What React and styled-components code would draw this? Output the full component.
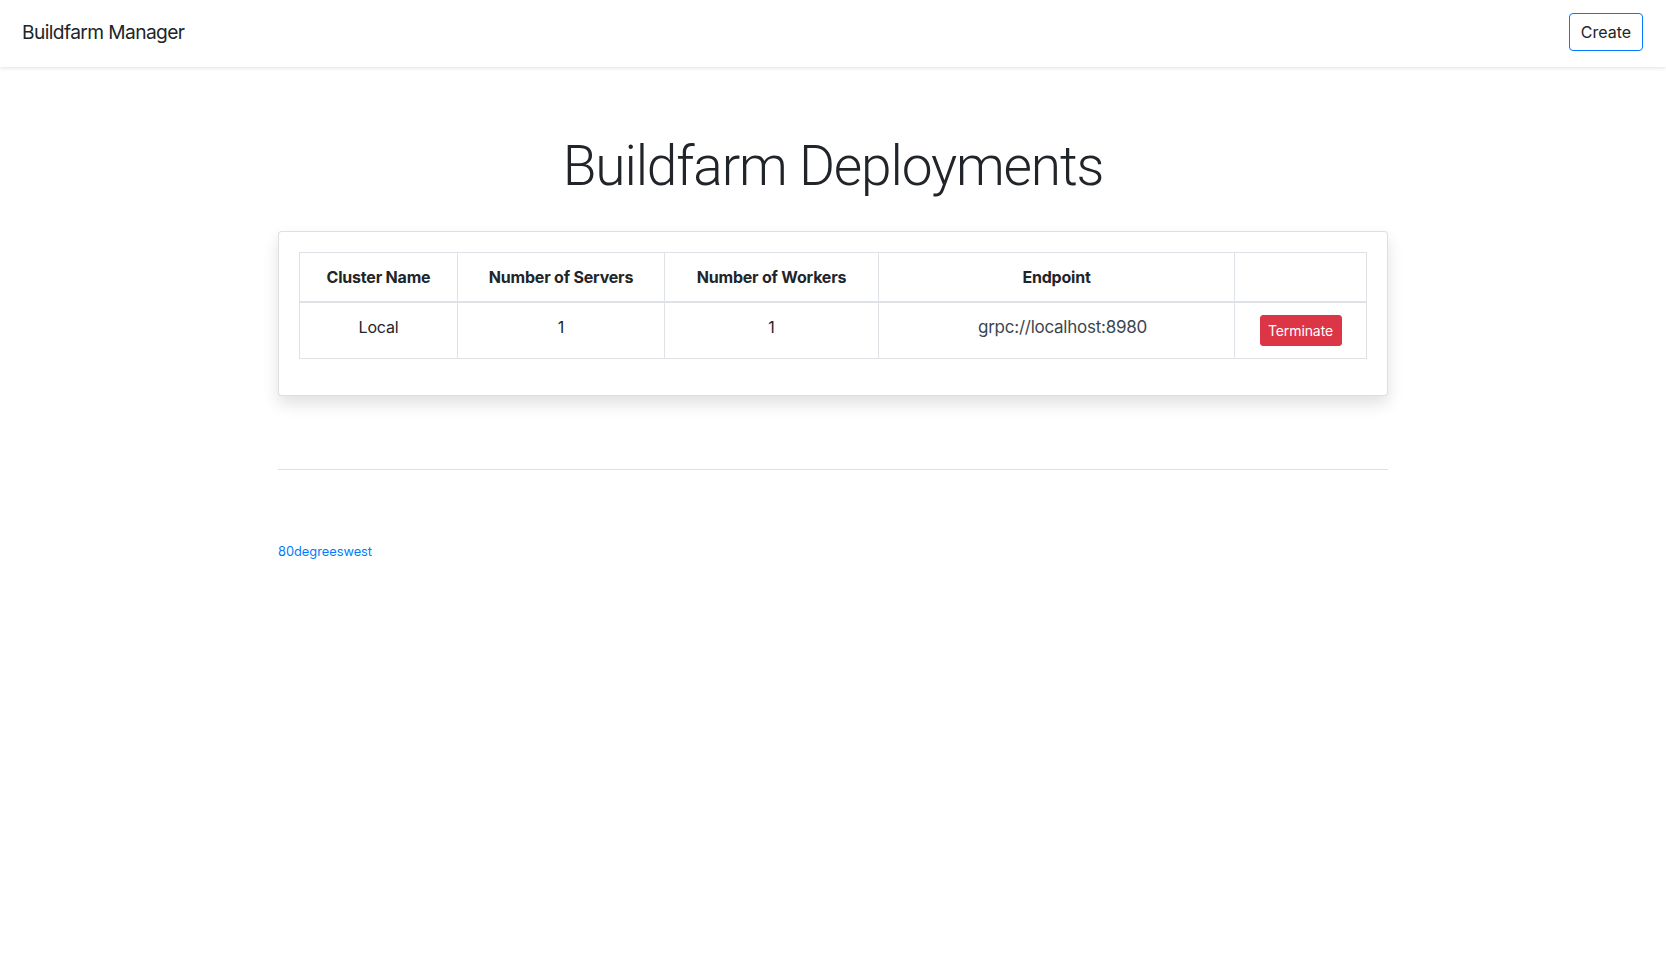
import React from "react";
import styled, { createGlobalStyle } from "styled-components";

const Global = createGlobalStyle`
  html, body { margin: 0; padding: 0; background: #fff; }
  body {
    font-family: Inter, "Liberation Sans", Arial, sans-serif;
    color: #212529;
    font-size: 16px;
    line-height: 1.5;
  }
  * { box-sizing: border-box; }
`;

const Navbar = styled.nav`
  height: 67px;
  display: flex;
  align-items: center;
  justify-content: space-between;
  padding: 0 23px 4px 22px;
  background: #fff;
  box-shadow: 0 1px 4px rgba(0, 0, 0, 0.12);
  position: relative;
`;

const Brand = styled.a`
  font-size: 19.2px;
  line-height: 30px;
  color: #212529;
  text-decoration: none;
  letter-spacing: -0.6px;
`;

const OutlineButton = styled.button`
  font-family: inherit;
  height: 38px;
  width: 74px;
  padding: 0;
  font-size: 16px;
  color: #212529;
  background: #fff;
  border: 1px solid #007bff;
  border-radius: 4px;
  cursor: pointer;
`;

const Container = styled.main`
  max-width: 1140px;
  padding: 0 15px;
  margin: 0 auto;
`;

const Title = styled.h1`
  margin: 66px 0 31px;
  font-family: Roboto, Inter, sans-serif;
  font-size: 55px;
  font-weight: 300;
  line-height: 67px;
  text-align: center;
  letter-spacing: -1.15px;
  color: #212529;
`;

const Card = styled.section`
  border: 1px solid rgba(0, 0, 0, 0.125);
  border-radius: 4px;
  box-shadow: 0 8px 16px rgba(0, 0, 0, 0.12);
  padding: 20px;
  background: #fff;
`;

const Table = styled.table`
  width: 100%;
  border-collapse: collapse;
  margin-bottom: 16px;
  table-layout: fixed;
`;

const Th = styled.th`
  border: 1px solid #dee2e6;
  border-bottom-width: 2px;
  padding: 12px;
  font-size: 16px;
  font-weight: 700;
  line-height: 24px;
  text-align: center;
  vertical-align: bottom;
  letter-spacing: -0.2px;
`;

const Td = styled.td`
  border: 1px solid #dee2e6;
  padding: 12px;
  font-size: 16px;
  line-height: 24px;
  text-align: center;
  vertical-align: top;
  letter-spacing: -0.2px;
`;

const Endpoint = styled.span`
  display: inline-block;
  font-size: 17px;
  line-height: 22px;
  color: #3b4650;
  padding-left: 12px;
  letter-spacing: -0.25px;
`;

const DangerButton = styled.button`
  display: block;
  margin: 0 auto;
  font-family: inherit;
  height: 31px;
  width: 82px;
  padding: 0;
  font-size: 14px;
  color: #fff;
  background: #dc3545;
  border: 1px solid #dc3545;
  border-radius: 3px;
  cursor: pointer;
  letter-spacing: -0.1px;
`;

const Rule = styled.hr`
  margin: 73px 0 0;
  border: 0;
  border-top: 1px solid rgba(0, 0, 0, 0.12);
`;

const Footer = styled.footer`
  padding-top: 68px;
`;

const FooterLink = styled.a`
  font-size: 12.8px;
  line-height: 19px;
  color: #007bff;
  text-decoration: none;
`;

const columns = [
  { label: "Cluster Name", width: 158 },
  { label: "Number of Servers", width: 207 },
  { label: "Number of Workers", width: 214 },
  { label: "Endpoint", width: 356 },
  { label: "", width: 132 },
];

const deployments = [
  { name: "Local", servers: 1, workers: 1, endpoint: "grpc://localhost:8980" },
];

export default function App() {
  return (
    <>
      <Global />
      <Navbar>
        <Brand href="#">Buildfarm Manager</Brand>
        <OutlineButton>Create</OutlineButton>
      </Navbar>
      <Container>
        <Title>Buildfarm Deployments</Title>
        <Card>
          <Table>
            <colgroup>
              {columns.map((c, i) => (
                <col key={i} style={{ width: c.width }} />
              ))}
            </colgroup>
            <thead>
              <tr>
                {columns.map((c, i) => (
                  <Th key={i}>{c.label}</Th>
                ))}
              </tr>
            </thead>
            <tbody>
              {deployments.map((d) => (
                <tr key={d.name}>
                  <Td>{d.name}</Td>
                  <Td>{d.servers}</Td>
                  <Td>{d.workers}</Td>
                  <Td>
                    <Endpoint>{d.endpoint}</Endpoint>
                  </Td>
                  <Td>
                    <DangerButton>Terminate</DangerButton>
                  </Td>
                </tr>
              ))}
            </tbody>
          </Table>
        </Card>
        <Rule />
        <Footer>
          <FooterLink href="#">80degreeswest</FooterLink>
        </Footer>
      </Container>
    </>
  );
}
